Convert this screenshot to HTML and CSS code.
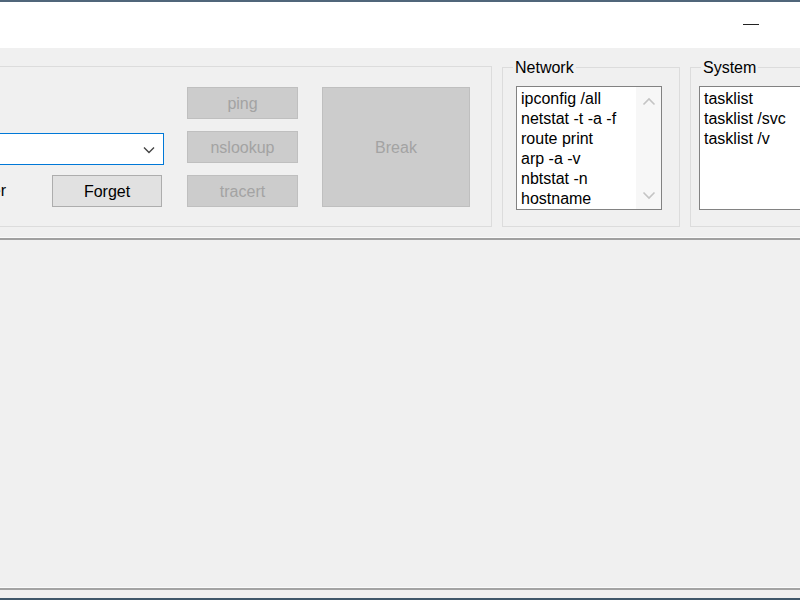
FILE: index.html
```html
<!DOCTYPE html>
<html>
<head>
	<title>Net Tools</title>
	<link rel="stylesheet" href="styles.css">
</head>
<body>
	<div class="titlebar">
		<div class="minimize"></div>
	</div>
	<div class="panel">
		<fieldset class="group main">
			<div class="host">
				<div class="combo">
					<input type="text" class="combo-input">
					<svg class="chevron" width="12" height="8" viewBox="0 0 12 8"><path d="M1 1.5 L6 6.5 L11 1.5" fill="none" stroke="#444" stroke-width="1.4"/></svg>
				</div>
				<div class="host-row">
					<span class="label">Remember</span>
					<button class="btn">Forget</button>
				</div>
			</div>
			<div class="tools">
				<button class="btn" disabled>ping</button>
				<button class="btn" disabled>nslookup</button>
				<button class="btn" disabled>tracert</button>
			</div>
			<button class="btn break" disabled>Break</button>
		</fieldset>
		<fieldset class="group network">
			<legend>Network</legend>
			<div class="listbox">
				<ul>
					<li>ipconfig /all</li>
					<li>netstat -t -a -f</li>
					<li>route print</li>
					<li>arp -a -v</li>
					<li>nbtstat -n</li>
					<li>hostname</li>
				</ul>
				<div class="scrollbar">
					<svg width="14" height="9" viewBox="0 0 14 9"><path d="M1.5 7.5 L7 2 L12.5 7.5" fill="none" stroke="#c4c4c4" stroke-width="1.6"/></svg>
					<svg width="14" height="9" viewBox="0 0 14 9"><path d="M1.5 1.5 L7 7 L12.5 1.5" fill="none" stroke="#c4c4c4" stroke-width="1.6"/></svg>
				</div>
			</div>
		</fieldset>
		<fieldset class="group system">
			<legend>System</legend>
			<div class="listbox">
				<ul>
					<li>tasklist</li>
					<li>tasklist /svc</li>
					<li>tasklist /v</li>
				</ul>
			</div>
		</fieldset>
	</div>
	<div class="separator"></div>
	<div class="output"></div>
	<div class="statusline"></div>
</body>
</html>
```

FILE: styles.css
```css
html, body {
	margin: 0;
	padding: 0;
}
body {
	width: 800px;
	height: 600px;
	overflow: hidden;
	background-color: #f0f0f0;
	font-family: "Liberation Sans", Arial, sans-serif;
	font-size: 16px;
	color: #000;
	box-sizing: border-box;
	border-bottom: 2px solid #40576a;
}
.titlebar {
	height: 46px;
	background-color: #fff;
	border-top: 2px solid #50667a;
	position: relative;
}
.minimize {
	position: absolute;
	left: 743px;
	top: 22px;
	width: 16px;
	height: 1px;
	background-color: #222;
}
.panel {
	display: flex;
	align-items: flex-end;
	gap: 10px;
	height: 179px;
	margin-left: -40px;
	width: 880px;
}
.group {
	margin: 0;
	border: 1px solid #dcdcdc;
	box-sizing: border-box;
	min-width: 0;
	flex-shrink: 0;
}
.group legend {
	padding: 0 2px;
	line-height: 18px;
	color: #000;
	position: relative;
	top: 1px;
}
.main {
	width: 532px;
	height: 161px;
	padding: 20px 21px 19px 3px;
	display: flex;
	gap: 23px;
}
.host {
	width: 200px;
	display: flex;
	flex-direction: column;
	gap: 10px;
	padding-top: 46px;
}
.combo {
	position: relative;
	height: 32px;
	box-sizing: border-box;
	border: 1px solid #0078d7;
	background-color: #fff;
}
.combo-input {
	border: none;
	outline: none;
	width: 100%;
	height: 100%;
	background: transparent;
	padding: 0;
}
.chevron {
	position: absolute;
	right: 8px;
	top: 12px;
}
.host-row {
	display: flex;
	justify-content: flex-end;
	align-items: center;
	padding-right: 2px;
}
.label {
	margin-right: 46px;
	white-space: nowrap;
	flex-shrink: 0;
}
.btn {
	font-family: "Liberation Sans", Arial, sans-serif;
	font-size: 16px;
	height: 32px;
	width: 110px;
	flex-shrink: 0;
	background-color: #e1e1e1;
	border: 1px solid #adadad;
	color: #000;
	padding: 2px 0 0;
	box-sizing: border-box;
}
.btn:disabled {
	background-color: #cccccc;
	border-color: #bfbfbf;
	color: #a3a3a3;
}
.tools {
	width: 111px;
	display: flex;
	flex-direction: column;
	gap: 12px;
}
.tools .btn {
	width: 111px;
}
.main .break {
	width: 148px;
	height: 120px;
	margin-left: 1px;
}
.network {
	width: 178px;
	padding: 10px 17px 16px 13px;
}
.network legend {
	margin-left: -3px;
}
.system {
	width: 140px;
	padding: 10px 0 16px 8px;
}
.system legend {
	margin-left: 2px;
}
.listbox {
	height: 124px;
	box-sizing: border-box;
	border: 1px solid #828282;
	background-color: #fff;
	display: flex;
}
.listbox ul {
	list-style: none;
	margin: 0;
	padding: 2px 0 0 4px;
	flex: 1;
	line-height: 20px;
	white-space: nowrap;
	overflow: hidden;
}
.scrollbar {
	width: 25px;
	background-color: #f7f7f7;
	display: flex;
	flex-direction: column;
	justify-content: space-between;
	align-items: center;
	padding: 10px 0 9px;
}
.separator {
	margin-top: 11px;
	height: 2px;
	background-color: #a0a0a0;
	box-shadow: 0 -1px 0 #fafafa;
}
.output {
	height: 348px;
}
.statusline {
	height: 2px;
	background-color: #a3a3a3;
	box-shadow: 0 -1px 0 #fafafa;
}
```
